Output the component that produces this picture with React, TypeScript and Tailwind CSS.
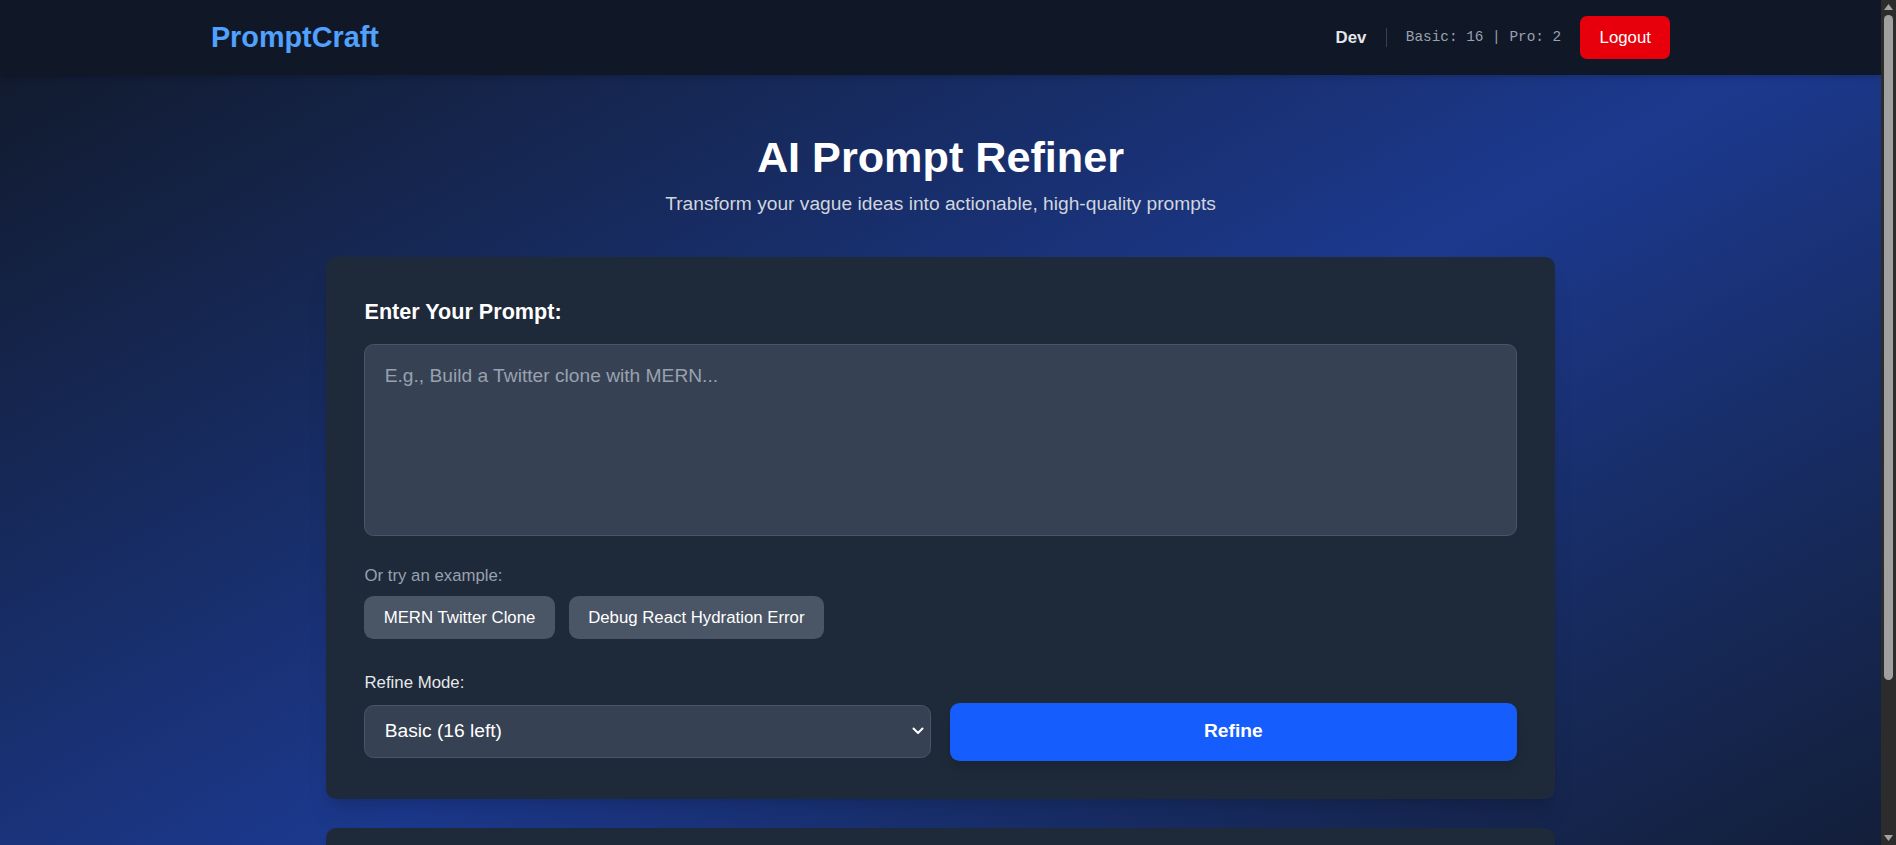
import { useState } from 'react';

const EXAMPLES: Record<string, string> = {
    'MERN Twitter Clone': 'Build a Twitter clone with the MERN stack',
    'Debug React Hydration Error': 'Help me debug a React hydration error in my Next.js app',
};

export default function App() {
    const [prompt, setPrompt] = useState('');
    const [mode, setMode] = useState('basic');

    return (
        <div className="flex h-screen font-['Liberation_Sans',Arial,sans-serif]">
            <div className="flex-1 overflow-y-auto [scrollbar-width:none]">
                <div className="min-h-full bg-linear-to-br from-gray-900 via-blue-900 to-gray-900">
                    {/* Navbar */}
                    <header className="bg-gray-900 shadow-md">
                        <div className="max-w-[1536px] mx-auto px-[38.4px] h-[75px] flex items-center justify-between">
                            <h1 className="text-[28.8px] font-bold text-blue-400">PromptCraft</h1>
                            <div className="flex items-center gap-[19.2px]">
                                <span className="text-[16.8px] font-bold text-gray-200">Dev</span>
                                <span className="w-px h-[19px] bg-gray-700" />
                                <span className="font-['Liberation_Mono',monospace] text-[14.4px] text-gray-400">Basic: 16 | Pro: 2</span>
                                <button className="h-[43px] px-[19.2px] rounded-[7px] bg-red-600 text-white text-[16.8px]">Logout</button>
                            </div>
                        </div>
                    </header>

                    <main className="max-w-[1228.8px] mx-auto pt-[57.6px] pb-[57.6px]">
                        <div className="text-center">
                            <h2 className="text-[43.2px] leading-[48px] font-bold text-white">AI Prompt Refiner</h2>
                            <p className="mt-[9px] text-[19.2px] leading-[28.8px] text-gray-300">Transform your vague ideas into actionable, high-quality prompts</p>
                        </div>

                        {/* Input card */}
                        <div className="mt-[38.4px] bg-gray-800 rounded-[10px] p-[38.4px] shadow-xl">
                            <label className="block text-[21.6px] leading-[33.6px] font-semibold text-white mb-[15.4px]">Enter Your Prompt:</label>
                            <textarea
                                value={prompt}
                                onChange={(e) => setPrompt(e.target.value)}
                                placeholder="E.g., Build a Twitter clone with MERN..."
                                className="block w-full h-[192px] resize-none bg-gray-700 border border-gray-600 rounded-[9.6px] p-[19.2px] text-[19.2px] leading-[24px] text-white placeholder:text-gray-400 outline-none"
                            />

                            <p className="mt-[28px] text-[16.8px] leading-[24px] text-gray-400">Or try an example:</p>
                            <div className="mt-[8px] flex gap-[14.4px]">
                                {Object.keys(EXAMPLES).map((label) => (
                                    <button
                                        key={label}
                                        onClick={() => setPrompt(EXAMPLES[label])}
                                        className="px-[19.2px] py-[9.6px] rounded-[9.6px] bg-gray-600 text-white text-[16.8px] leading-[24px]"
                                    >
                                        {label}
                                    </button>
                                ))}
                            </div>

                            <div className="mt-[32px] grid grid-cols-2 gap-[19.2px] items-end">
                                <div className="pb-[2.6px]">
                                    <label className="block text-[16.8px] leading-[24px] text-gray-200 mb-[9.6px]">Refine Mode:</label>
                                    <div className="relative">
                                        <select
                                            value={mode}
                                            onChange={(e) => setMode(e.target.value)}
                                            className="block w-full h-[53px] appearance-none bg-gray-700 border border-gray-600 rounded-[9.6px] pl-[19.2px] text-[19.2px] text-white outline-none"
                                        >
                                            <option value="basic">Basic (16 left)</option>
                                            <option value="pro">Pro (2 left)</option>
                                        </select>
                                        <svg className="pointer-events-none absolute right-[7px] top-1/2 -translate-y-1/2" width="12" height="8" viewBox="0 0 12 8" fill="none">
                                            <path d="M1.5 1.5 6 6l4.5-4.5" stroke="white" strokeWidth="2" strokeLinecap="round" strokeLinejoin="round" />
                                        </svg>
                                    </div>
                                </div>
                                <button className="h-[57.6px] w-full rounded-[9.6px] bg-blue-600 text-white text-[19.2px] font-semibold shadow-lg">Refine</button>
                            </div>
                        </div>

                        <div className="mt-[28.8px] bg-gray-800 rounded-[10px] p-[38.4px] shadow-xl">
                            <div className="h-[72px] bg-gray-900/60 border border-gray-700 rounded-[9.6px]" />
                        </div>
                    </main>
                </div>
            </div>

            {/* Scrollbar */}
            <div className="w-[15px] shrink-0 bg-[#2c2c2c] flex flex-col items-center">
                <svg className="mt-[4px]" width="9" height="6" viewBox="0 0 9 6">
                    <path d="M4.5 0 9 6H0z" fill="#a3a3a3" />
                </svg>
                <div className="mt-[5px] w-[9px] h-[665px] rounded-full bg-[#a0a0a0]" />
                <div className="flex-1" />
                <svg className="mb-[4px]" width="9" height="6" viewBox="0 0 9 6">
                    <path d="M0 0h9L4.5 6z" fill="#a3a3a3" />
                </svg>
            </div>
        </div>
    );
}
